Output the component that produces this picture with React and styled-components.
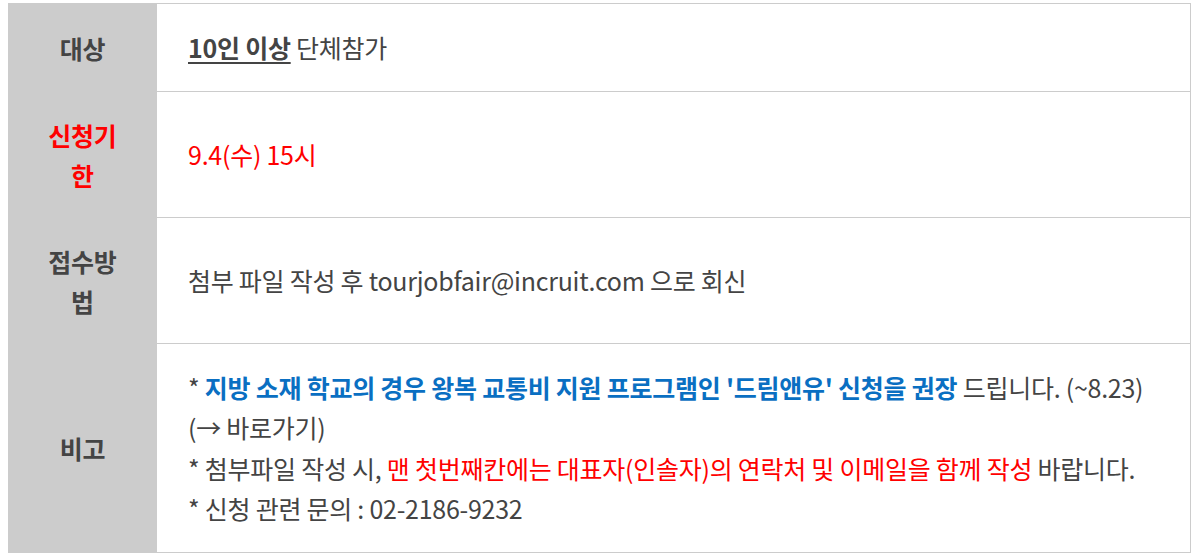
import React from "react";
import styled, { createGlobalStyle } from "styled-components";

const Global = createGlobalStyle`
  html, body { margin: 0; padding: 0; background: #fff; }
  body {
    font-family: "Noto Sans CJK KR", "Noto Sans", sans-serif;
    color: #444;
  }
`;

const Page = styled.div`
  padding: 3px 0 0 8px;
`;

const Table = styled.div`
  width: 1183px;
  border-top: 1px solid #ccc;
  display: flex;
  flex-direction: column;
`;

const Row = styled.div`
  display: grid;
  grid-template-columns: 149px 1fr;
`;

const Label = styled.div`
  background: #ccc;
  color: ${(p) => (p.$red ? "#ff0000" : "#444")};
  font-weight: 700;
  font-size: 25px;
  line-height: 40px;
  letter-spacing: -0.25px;
  text-align: center;
  padding: 23px 30px;
  display: flex;
  align-items: center;
  justify-content: center;
  word-break: break-all;
`;

const Value = styled.div`
  border-bottom: 1px solid #ccc;
  border-right: 1px solid #ccc;
  padding: 23px 31px;
  font-size: 25px;
  line-height: 40.5px;
  letter-spacing: -0.25px;
  display: flex;
  flex-direction: column;
  justify-content: center;
  color: ${(p) => (p.$red ? "#ff0000" : "#444")};
`;

const Line = styled.div``;

const Strong = styled.b`
  font-weight: 700;
  text-decoration: ${(p) => (p.$underline ? "underline" : "none")};
  text-underline-offset: 4px;
  text-decoration-thickness: 2px;
  color: ${(p) => (p.$blue ? "#0a6fc2" : "inherit")};
`;

const Red = styled.span`
  color: #ff0000;
`;

export default function App() {
  return (
    <>
      <Global />
      <Page>
        <Table>
          <Row>
            <Label>대상</Label>
            <Value>
              <Line>
                <Strong $underline>10인 이상</Strong> 단체참가
              </Line>
            </Value>
          </Row>
          <Row>
            <Label $red>신청기한</Label>
            <Value $red>
              <Line>9.4(수) 15시</Line>
            </Value>
          </Row>
          <Row>
            <Label>접수방법</Label>
            <Value>
              <Line>첨부 파일 작성 후 tourjobfair@incruit.com 으로 회신</Line>
            </Value>
          </Row>
          <Row>
            <Label>비고</Label>
            <Value>
              <Line>
                * <Strong $blue>지방 소재 학교의 경우 왕복 교통비 지원 프로그램인 '드림앤유' 신청을 권장</Strong> 드립니다. (~8.23)
              </Line>
              <Line>(→ 바로가기)</Line>
              <Line>
                * 첨부파일 작성 시, <Red>맨 첫번째칸에는 대표자(인솔자)의 연락처 및 이메일을 함께 작성</Red> 바랍니다.
              </Line>
              <Line>* 신청 관련 문의 : 02-2186-9232</Line>
            </Value>
          </Row>
        </Table>
      </Page>
    </>
  );
}
